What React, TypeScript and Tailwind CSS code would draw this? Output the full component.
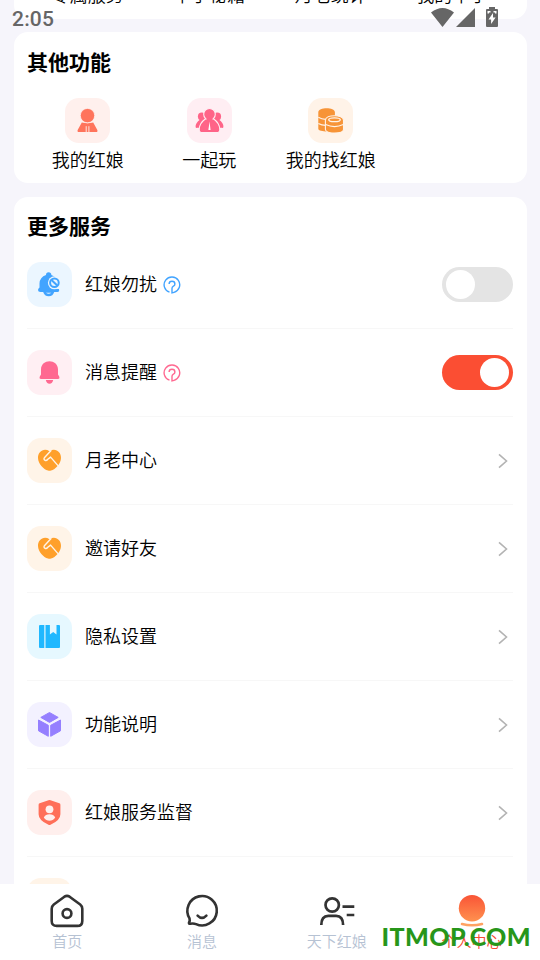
import React, { useState } from "react";

const tools = [
  { name: "我的红娘", icon: PersonIcon, box: "bg-[#fff0ed] text-[#ff745c]" },
  { name: "一起玩", icon: GroupIcon, box: "bg-[#ffeef3] text-[#ff6488]" },
  { name: "我的找红娘", icon: CoinsIcon, box: "bg-[#fff3e8] text-[#f79437]" },
];

const services = [
  { name: "红娘勿扰", icon: MuteBellIcon, box: "bg-[#ebf6ff] text-[#42a4ff]", toggle: true, help: "text-[#42a4ff]" },
  { name: "消息提醒", icon: BellIcon, box: "bg-[#ffeff3] text-[#ff6991]", toggle: true, help: "text-[#ff6991]" },
  { name: "月老中心", icon: HeartIcon, box: "bg-[#fff4e8] text-[#ffa02b]" },
  { name: "邀请好友", icon: HeartIcon, box: "bg-[#fff4e8] text-[#ffa02b]" },
  { name: "隐私设置", icon: BookIcon, box: "bg-[#e6f8ff] text-[#20b8ff]" },
  { name: "功能说明", icon: CubeIcon, box: "bg-[#f3f1ff] text-[#957fff]" },
  { name: "红娘服务监督", icon: ShieldIcon, box: "bg-[#ffefed] text-[#ff6f59]" },
];

const tabs = [
  { name: "首页", icon: HomeIcon },
  { name: "消息", icon: ChatIcon },
  { name: "天下红娘", icon: MatchmakerIcon },
  { name: "个人中心", icon: ProfileIcon },
];

function PersonIcon() {
  return (
    <svg width="45" height="45" viewBox="0 0 45 45" fill="currentColor">
      <path d="M16.800 24.600q5.700 1.500 11.400 0l4 7.100q1 2.300-1.200 2.300H14q-2.200 0-1.200-2.300z" />
      <circle cx="22.500" cy="17.600" r="7.200" stroke="#fff0ed" strokeWidth="0.800" />
      <path d="M21.200 28.200v6M23.900 28.200v6" fill="none" stroke="#fff0ed" strokeWidth="0.900" />
    </svg>
  );
}

function GroupIcon() {
  return (
    <svg width="45" height="45" viewBox="0 0 45 45" fill="currentColor">
      <circle cx="14.800" cy="18.400" r="3.900" />
      <circle cx="30.200" cy="18.400" r="3.900" />
      <path d="M13.200 21.400q-5 3.500-4.600 7.600.3 1.200 1.500.8h6V21zM31.800 21.400q5 3.500 4.600 7.600-.3 1.200-1.500.8h-6V21z" />
      <g stroke="#ffeef3" strokeWidth="1.100">
        <path d="M18.600 20.800h7.800q6.200 4.300 6.400 10.600 0 3.200-3 3.200H15.200q-3 0-3-3.200.2-6.300 6.400-10.600z" />
        <circle cx="22.500" cy="16.300" r="5.800" />
      </g>
      <path d="M19.400 20.300h6.200v3h-6.200z" />
      <path d="M22.500 23.500l1.100 8.500h-2.200z" fill="#fff" />
    </svg>
  );
}

function CoinsIcon() {
  return (
    <svg width="45" height="45" viewBox="0 0 45 45" fill="currentColor">
      <path d="M10.300 14.300c0-5.300 16.600-5.300 16.600 0v17c0 3-16.600 3-16.600-.5z" />
      <path d="M10.300 19.300q4 2.400 8.500 2M10.300 25.500q3.500 2 8 1.900" stroke="#fff3e8" strokeWidth="1.100" fill="none" />
      <path d="M17.400 22.200c0-6 18.100-6 18.100 0v9.300c0 4.800-18.100 4.800-18.100 0z" stroke="#fff3e8" strokeWidth="1.100" />
      <ellipse cx="26.500" cy="21.700" rx="5.800" ry="1.900" fill="none" stroke="#fff3e8" strokeWidth="1.300" />
      <path d="M17.600 26.600q9 4 17.700 0" stroke="#fff3e8" strokeWidth="1.100" fill="none" />
    </svg>
  );
}

function MuteBellIcon() {
  return (
    <svg width="45" height="45" viewBox="0 0 45 45" fill="currentColor">
      <path d="M19 13q0-2.700 2.600-2.700t2.800 2.700q3.500 1 5 3.500v10.500h2.500q1 3-1.500 3H13.500q-2.500 0-2.500-2 0-1.200 1.500-2.500V21.500q.3-6.500 6.500-8.500z" />
      <path d="M16.200 30h11q-1.200 4.200-5.500 4.200T16.200 30z" />
      <path d="M18.900 30.800h5.400q-2.600 1.700-5.400 0z" fill="#ebf6ff" />
      <circle cx="27.400" cy="20.800" r="6.500" fill="#ebf6ff" />
      <circle cx="27.400" cy="20.800" r="4.300" fill="none" stroke="currentColor" strokeWidth="2" />
      <path d="M24.500 18l6 5.800" stroke="currentColor" strokeWidth="2" />
    </svg>
  );
}

function BellIcon() {
  return (
    <svg width="45" height="45" viewBox="0 0 45 45" fill="currentColor">
      <path d="M14 24.500v-5c0-11 17-11 17 0v5l1.200 2q.8 2.500-1.200 2.500H14q-2 0-1.200-2.500z" />
      <path d="M18.800 30h7.400q-.7 3.700-3.700 3.700T18.800 30z" />
    </svg>
  );
}

function HeartIcon() {
  return (
    <svg width="45" height="45" viewBox="0 0 45 45">
      <path d="M22.500 13.200C16.500 9.500 10.800 14 11 20c.2 6 5.500 11.200 10 12.600q1.500.5 3 0C28.500 31.200 33.800 26 34 20c.2-6-5.500-10.500-11.500-6.800z" fill="currentColor" />
      <path d="M24.300 12.200l-6.700 7.200q-1.400 2.100.5 3 1.400.6 2.700-1.100l2.800-2.200 7.600 8.800" fill="none" stroke="#fff4e8" strokeWidth="1.400" strokeLinejoin="round" />
    </svg>
  );
}

function BookIcon() {
  return (
    <svg width="45" height="45" viewBox="0 0 45 45" fill="currentColor">
      <path d="M13 11h4.300v23H13q-1 0-1-1V12q0-1 1-1zM18.500 11h4.400v9.500l3.300-2.400 3.300 2.400V11H32q1 0 1 1v21q0 1-1 1H18.500z" />
    </svg>
  );
}

function CubeIcon() {
  return (
    <svg width="45" height="45" viewBox="0 0 45 45" fill="currentColor" stroke="currentColor" strokeLinejoin="round">
      <path d="M22.500 10.500l8.700 4.900-8.700 5-8.700-5zM11.500 18l9.800 5.300v11l-9.800-5.500zM33.500 18l-9.800 5.300v11l9.800-5.500z" />
    </svg>
  );
}

function ShieldIcon() {
  return (
    <svg width="45" height="45" viewBox="0 0 45 45">
      <path d="M21.500 10.300q1-.4 2 0l8.900 2.900q1 .4 1 1.500v9.600q0 6.200-9.900 10.500-1 .4-2 0-9.900-4.300-9.900-10.500v-9.600q0-1.100 1-1.500z" fill="currentColor" />
      <circle cx="22.500" cy="19.300" r="3.900" fill="#ffefed" />
      <path d="M16.800 27.500q1.700-3.300 5.700-3.300t5.700 3.300q-2.300 3.300-5.700 3.300t-5.700-3.300z" fill="#ffefed" />
    </svg>
  );
}

function HelpIcon() {
  return (
    <svg width="18" height="18" viewBox="0 0 18 18" fill="none" stroke="currentColor" strokeWidth="1.400">
      <path d="M6.500 16.200A7.800 7.800 0 1 1 11 16.300L9 16.900v-4.600q0-1.300 1.400-2.100 1.500-.9 1.500-2.300a2.900 2.700 0 0 0-5.800 0" />
    </svg>
  );
}

function HomeIcon() {
  return (
    <svg width="36" height="36" viewBox="0 0 36 36" fill="none" stroke="#333" strokeWidth="2.600" strokeLinejoin="round">
      <path d="M15.400 3.700q2.600-1.700 5.200 0l10.600 7.800q2.100 1.700 2.100 4.200v12.200q0 5-5 5H7.700q-5 0-5-5V15.700q0-2.500 2.100-4.200z" />
      <circle cx="18" cy="20.500" r="4.400" />
    </svg>
  );
}

function ChatIcon() {
  return (
    <svg width="36" height="36" viewBox="0 0 36 36" fill="none" stroke="#333" strokeWidth="2.600" strokeLinejoin="round" strokeLinecap="round">
      <path d="M5.500 25.300A14.700 14.700 0 1 1 12 31.100Q9.500 30.200 6 30.800 4.800 30.800 5 29.700 6.200 27.500 5.500 25.300z" />
      <path d="M13.600 22.600q4.400 4.600 8.800 0" />
    </svg>
  );
}

function MatchmakerIcon() {
  return (
    <svg width="36" height="36" viewBox="0 0 36 36" fill="none" stroke="#333" strokeWidth="2.700">
      <circle cx="13.200" cy="12" r="6.700" />
      <path d="M2.300 32c0-7.500 3.500-9.200 7-9.200h7.800c4 0 7 1.700 7 9.200M23.500 13.600h11.800M27.700 22h7.600" />
    </svg>
  );
}

function ProfileIcon() {
  return (
    <svg width="36" height="36" viewBox="0 0 36 36" fill="none">
      <defs>
        <linearGradient id="profile" x1="0" y1="0" x2="0" y2="1">
          <stop stopColor="#f95436" />
          <stop offset="1" stopColor="#ff914f" />
        </linearGradient>
      </defs>
      <circle cx="18" cy="15.200" r="13.200" fill="url(#profile)" />
      <path d="M8 31q10 2.500 20 0" stroke="#ffa263" strokeWidth="2.600" strokeLinecap="round" />
    </svg>
  );
}

const Switch = ({ on, onClick }: { on: boolean; onClick: () => void }) => (
  <button
    onClick={onClick}
    className={`w-[71px] h-[35px] rounded-full px-1 flex items-center ${on ? "bg-[#fb4e33] justify-end" : "bg-[#e4e4e4] justify-start"}`}
  >
    <span className="w-[29px] h-[29px] rounded-full bg-white"></span>
  </button>
);

const StatusBar = () => (
  <div className="absolute top-0 left-0 w-full h-9 z-20 text-[#666]">
    <div className="flex justify-between pl-3 pr-[41px] pt-[7px]">
      <span className="font-[Roboto] font-medium text-[21px] leading-6 tracking-[0.2px]">2:05</span>
      <svg width="69" height="21" viewBox="0 0 69 21" fill="currentColor">
        <path d="M1 5.500Q12.500-3.500 24 5.500L12.500 20zM45 1v19H26zM59 0h6v2h2q1 0 1 1v16q0 1-1 1H57q-1 0-1-1V3q0-1 1-1h2z" />
        <path d="M63 6l-4.500 6.500h2.600V17l4.500-6.500H63zM57.500 4h3v1.500h-1.500V6.500h-1.500zM66.500 4h-3v1.500h1.500v1h1.500z" fill="#fff" />
      </svg>
    </div>
  </div>
);

export default function App() {
  const [switches, setSwitches] = useState<Record<string, boolean>>({ 消息提醒: true });

  return (
    <div className="relative w-[540px] h-[960px] overflow-hidden bg-[#f6f5fb] text-black font-['Noto_Sans_CJK_SC',sans-serif] flex flex-col">
      <StatusBar />

      <main className="flex-1 min-h-0 overflow-hidden pl-3.5 pr-[13px] flex flex-col">
        <section className="h-[19px] shrink-0 bg-white rounded-b-[14px] pl-[13px] pr-3.5 grid grid-cols-4 text-center text-[18px] font-[350] leading-[26px]">
          {["专属服务", "牵手秘籍", "月老统计", "我的牵手"].map((name) => (
            <span key={name} className="-mt-[19px]">{name}</span>
          ))}
        </section>

        <section className="mt-[13px] h-[151px] shrink-0 bg-white rounded-[14px] pl-[13px] pr-3.5 pt-3.5">
          <h2 className="text-[21px] leading-[30px] font-bold">其他功能</h2>
          <div className="mt-[22px] grid grid-cols-4">
            {tools.map((item) => (
              <div key={item.name} className="flex flex-col items-center">
                <div className={`w-[45px] h-[45px] rounded-[14px] ${item.box}`}>
                  <item.icon />
                </div>
                <span className="mt-[3px] text-[18px] font-[350] leading-[26px] whitespace-nowrap">{item.name}</span>
              </div>
            ))}
          </div>
        </section>

        <section className="mt-3.5 shrink-0 bg-white rounded-t-[14px] pl-[13px] pr-3.5 pt-[13px]">
          <h2 className="mb-px text-[21px] leading-[30px] font-bold">更多服务</h2>
          {services.map((item) => (
            <div key={item.name} className="h-[88px] flex items-center border-b border-[#f7f7f7]">
              <div className={`w-[45px] h-[45px] rounded-[14px] ${item.box}`}>
                <item.icon />
              </div>
              <span className="ml-[13px] pb-[3px] text-[18px] font-[350] leading-[26px]">{item.name}</span>
              {item.help && (
                <span className={`ml-1.5 ${item.help}`}>
                  <HelpIcon />
                </span>
              )}
              <div className="ml-auto">
                {item.toggle ? (
                  <Switch
                    on={!!switches[item.name]}
                    onClick={() => setSwitches({ ...switches, [item.name]: !switches[item.name] })}
                  />
                ) : (
                  <svg className="mr-[5px]" width="10" height="16" viewBox="0 0 10 16" fill="none" stroke="#b3b3b3" strokeWidth="1.600">
                    <path d="M1 1.300L8.500 8 1 14.700" />
                  </svg>
                )}
              </div>
            </div>
          ))}
          <div className="h-[87px] flex items-center">
            <div className="w-[45px] h-[45px] rounded-[14px] bg-[#fff4e8]"></div>
          </div>
        </section>
      </main>

      <nav className="h-[76px] shrink-0 bg-white grid grid-cols-4 pt-[9px] pr-px">
        {tabs.map((tab, i) => (
          <div key={tab.name} className="flex flex-col items-center">
            <tab.icon />
            <span className={`mt-px text-[15px] font-[350] leading-[22px] ${i === 3 ? "text-[#f64a31]" : "text-[#b6c2d3]"}`}>{tab.name}</span>
          </div>
        ))}
      </nav>

      <span className="absolute right-[9px] bottom-2 z-30 font-[Lato] font-black text-[25px] leading-8 tracking-[0.4px] text-[#27961a]">
        ITMOP.COM
      </span>
    </div>
  );
}
